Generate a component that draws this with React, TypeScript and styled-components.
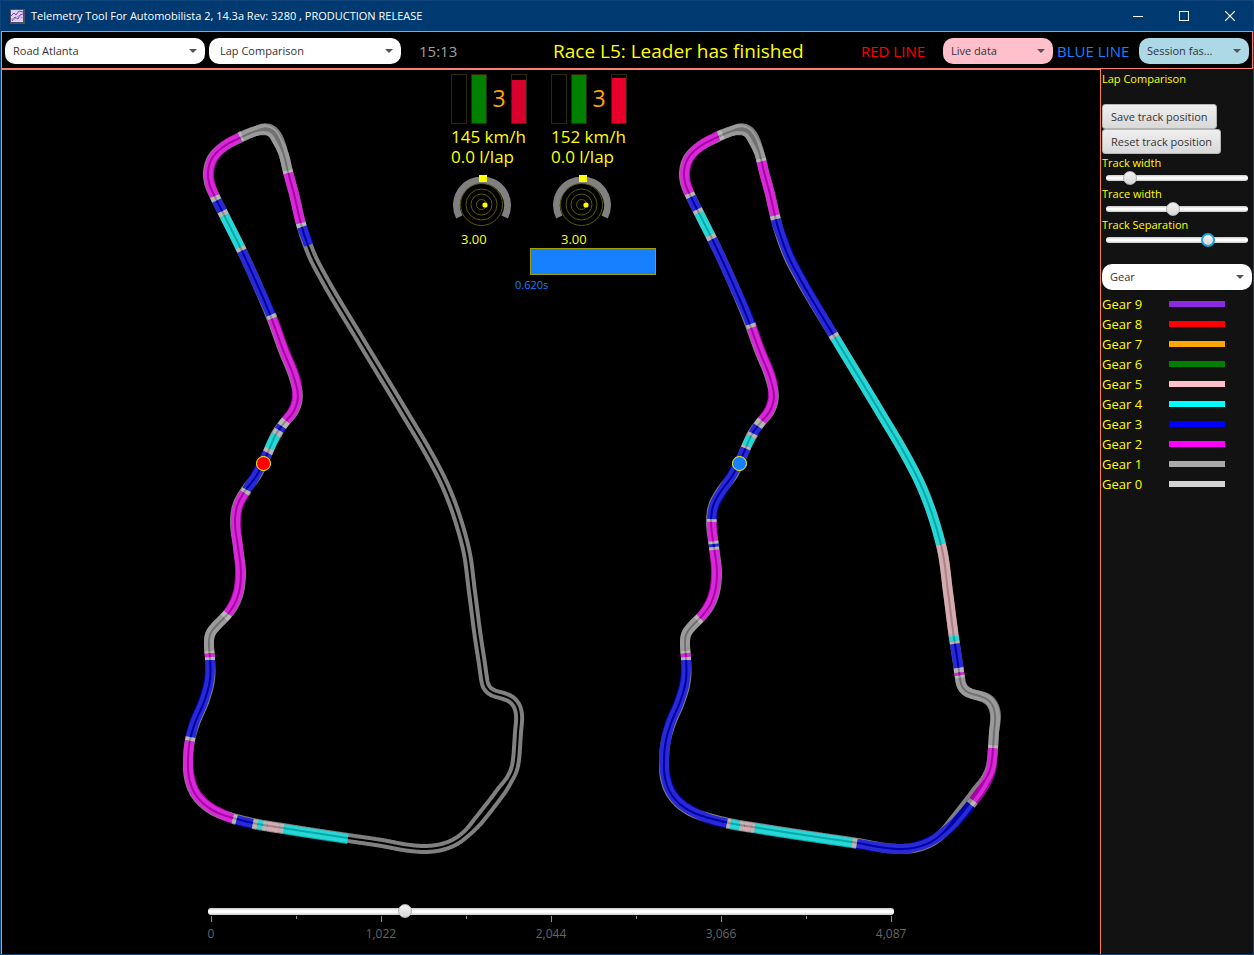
import React from "react";
import styled, { createGlobalStyle } from "styled-components";

const GlobalStyle = createGlobalStyle`
  * { box-sizing: border-box; }
  body {
    margin: 0;
    background: #000;
    font-family: "Open Sans", "Noto Sans", sans-serif;
    font-size: 11px;
    line-height: 16px;
  }
  button, select, input { font: inherit; margin: 0; }
`;

/* ---------- track geometry ---------- */

// x, y, half the distance between the two edge lines, racing line offset (outwards)
type ControlPoint = [number, number, number?, number?];
type Sample = { x: number; y: number; half: number; off: number; nx: number; ny: number };

const EDGE = 3;

const circuit: ControlPoint[] = [
  [265, 129, 4, 0], [256, 131, 3, 0], [242, 137, EDGE, 1], [223, 147, EDGE, 0], [212, 158, EDGE, -1],
  [208, 171, EDGE, -1], [209, 183, EDGE, -1], [215, 197], [223, 213], [241, 249, EDGE, 0], [257, 284],
  [271, 317, EDGE, -1], [283, 350, EDGE, -1], [295, 381, EDGE, -1], [298, 397, EDGE, 1], [294, 411, EDGE, 1],
  [284, 423], [276, 434, EDGE, -1], [271, 445], [268, 452], [263, 463, EDGE, 1], [257, 475, EDGE, 1],
  [245, 491, EDGE, -1], [237, 506, EDGE, -1], [235, 520, EDGE, -1], [238, 547], [241, 574, EDGE, 1],
  [239, 592, EDGE, 1], [233, 607, EDGE, 1], [226, 616], [217, 625], [210, 634], [209, 646], [210, 658],
  [210, 680, EDGE, 1], [204, 702, EDGE, 1], [195, 723, EDGE, 1], [190, 740], [188, 760, EDGE, 0], [189, 778, EDGE, -1],
  [195, 794, EDGE, -1], [205, 805, EDGE, -1], [218, 813, EDGE, -1], [233, 818, EDGE, 1], [253, 823, EDGE, 1],
  [283, 828, EDGE, 1], [348, 838, EDGE, 1], [382, 843, EDGE, 1], [410, 848, EDGE, 0], [427, 849, EDGE, 0], [442, 847, EDGE, -1],
  [455, 842, EDGE, -1], [467, 833, 3, 0], [478, 821, 4, 2], [490, 806, 4, 3],
  [502, 790, 4, 3], [509, 780, 3, 2], [514, 770, 3, 1], [516, 760], [517, 748], [518, 732, EDGE, 0], [519, 714, EDGE, 1],
  [517, 706, EDGE, 1], [511, 699, EDGE, 1], [500, 695], [491, 692], [486, 687], [484, 678], [482, 664], [478, 638], [472, 592],
  [466, 549], [461, 530], [454, 508], [443, 481], [430, 456], [404, 412, EDGE, 0], [358, 336, EDGE, 0], [323, 277, EDGE, 1],
  [313, 258, EDGE, 1], [306, 240, EDGE, 1], [301, 224], [294, 194, EDGE, 0], [288, 172, EDGE, 0], [283, 152, 3, 0],
  [278, 140, 4, -1], [272, 131, 4, -1],
];

function sampleCircuit(points: ControlPoint[]): Sample[] {
  const n = points.length;
  const at = (i: number) => points[(i + n) % n];
  const dist = (a: ControlPoint, b: ControlPoint) => Math.hypot(b[0] - a[0], b[1] - a[1]);
  const slope = (i: number, k: 0 | 1) => {
    const h0 = dist(at(i - 1), at(i));
    const h1 = dist(at(i), at(i + 1));
    const d0 = (at(i)[k] - at(i - 1)[k]) / h0;
    const d1 = (at(i + 1)[k] - at(i)[k]) / h1;
    return (d0 * h1 + d1 * h0) / (h0 + h1);
  };
  const out: Sample[] = [];
  for (let i = 0; i < n; i++) {
    const a = at(i);
    const b = at(i + 1);
    const h = dist(a, b);
    const steps = Math.ceil(h);
    for (let s = 0; s < steps; s++) {
      const t = s / steps;
      const blend = t * t * (3 - 2 * t);
      const hermite = (k: 0 | 1) =>
        (1 - blend) * a[k] + blend * b[k] +
        (t * t * t - 2 * t * t + t) * h * slope(i, k) +
        (t * t * t - t * t) * h * slope(i + 1, k);
      const mix = (p: number, q: number) => p + (q - p) * t;
      out.push({
        x: hermite(0), y: hermite(1),
        half: mix(a[2] ?? EDGE, b[2] ?? EDGE), off: mix(a[3] ?? 0, b[3] ?? 0),
        nx: 0, ny: 0,
      });
    }
  }
  // Round off the whole-pixel control points with a short moving average.
  const reach = 5;
  const smooth = out.map((p, i) => {
    let x = 0;
    let y = 0;
    for (let k = -reach; k <= reach; k++) {
      const q = out[(i + k + out.length) % out.length];
      x += q.x;
      y += q.y;
    }
    const count = 2 * reach + 1;
    return { ...p, x: x / count, y: y / count };
  });
  return smooth.map((p, i) => {
    const prev = smooth[(i - 3 + smooth.length) % smooth.length];
    const next = smooth[(i + 3) % smooth.length];
    const dx = next.x - prev.x;
    const dy = next.y - prev.y;
    const len = Math.hypot(dx, dy);
    return { ...p, nx: -dy / len, ny: dx / len };
  });
}

const samples = sampleCircuit(circuit);

const toPath = (list: Sample[], shift: (s: Sample) => number) =>
  list.map((s, i) => `${i ? "L" : "M"}${(s.x + s.nx * shift(s)).toFixed(2)} ${(s.y + s.ny * shift(s)).toFixed(2)}`).join("");

const outerEdge = toPath(samples, (s) => s.half) + "Z";
const innerEdge = toPath(samples, (s) => -s.half) + "Z";

const nearest = (x: number, y: number) => {
  let best = 0;
  let bestDistance = Infinity;
  samples.forEach((s, i) => {
    const d = Math.hypot(s.x - x, s.y - y);
    if (d < bestDistance) { bestDistance = d; best = i; }
  });
  return best;
};

const gearColors = ["lightgray", "darkgray", "magenta", "blue", "cyan", "pink", "green", "orange", "red", "#8a2be2"];

// gear, then the point where the driver leaves that gear
type Stint = [number, number, number];
type Lap = { start: [number, number]; stints: Stint[] };

const liveLap: Lap = {
  start: [308, 245],
  stints: [
    [3, 302, 227], [0, 301, 223], [2, 288, 173], [0, 287, 170], [1, 243, 136], [0, 240, 137], [2, 215, 196],
    [0, 217, 200], [3, 222, 211], [0, 224, 216], [4, 240, 247], [0, 242, 251], [3, 270, 315], [0, 272, 319],
    [2, 286, 421], [0, 282, 426], [3, 279, 430], [0, 276, 435], [4, 270, 449], [0, 268, 453], [3, 246, 489],
    [0, 244, 493], [2, 228, 614], [0, 224, 618], [1, 209, 651], [0, 209, 653], [2, 210, 657], [0, 210, 660],
    [3, 190, 737], [0, 190, 741], [2, 233, 818], [0, 237, 819], [3, 253, 823], [0, 258, 824], [4, 263, 825],
    [0, 267, 826], [5, 279, 828], [0, 284, 829], [4, 348, 838],
  ],
};

const fastestLap: Lap = {
  start: [284, 159],
  stints: [
    [1, 247, 134], [0, 243, 136], [2, 214, 193], [0, 215, 197], [3, 221, 209], [0, 223, 213], [4, 234, 235],
    [0, 236, 239], [3, 274, 324], [0, 275, 328], [2, 286, 421], [0, 282, 426], [3, 277, 433], [0, 275, 437],
    [4, 271, 446], [0, 270, 449], [3, 236, 519], [0, 236, 522], [2, 237, 541], [0, 237, 544], [3, 238, 547],
    [0, 238, 550], [2, 224, 618], [0, 221, 621], [1, 209, 651], [0, 209, 653], [2, 210, 657], [0, 210, 660],
    [3, 251, 823], [0, 255, 824], [4, 264, 825], [0, 268, 826], [5, 275, 827], [0, 279, 828], [4, 376, 843],
    [0, 381, 844], [3, 493, 803], [0, 496, 799], [2, 519, 748], [0, 519, 745], [1, 484, 678], [0, 483, 675],
    [2, 483, 672], [0, 482, 668], [3, 479, 644], [0, 478, 641], [4, 478, 636], [0, 478, 634], [5, 465, 544],
    [4, 359, 338], [0, 357, 334], [3, 300, 219], [0, 299, 215], [2, 285, 162], [0, 284, 159],
  ],
};

function stintPaths(lap: Lap) {
  let from = nearest(...lap.start);
  return lap.stints.map(([gear, x, y]) => {
    const to = nearest(x, y);
    const count = (to - from + samples.length) % samples.length;
    const part = Array.from({ length: count + 1 }, (_, i) => samples[(from + i) % samples.length]);
    from = to;
    return { gear, d: toPath(part, (s) => s.off) };
  });
}

/* ---------- window frame ---------- */

const Window = styled.div`
  min-height: 100vh;
  display: flex;
  flex-direction: column;
  background: #000;
  border: 1px solid #0f447a;
`;

const TitleBar = styled.header`
  height: 30px;
  flex: none;
  display: flex;
  align-items: center;
  background: #003a70;
  color: #fff;
`;

const AppTitle = styled.h1`
  flex: 1;
  margin: 0 0 0 6px;
  font-size: 11px;
  font-weight: 400;
  white-space: nowrap;
`;

const AppIcon = styled.svg`
  margin-left: 9px;
  flex: none;
`;

const WindowButton = styled.button`
  width: 46px;
  height: 30px;
  padding: 0;
  border: 0;
  background: none;
  display: grid;
  place-items: center;
`;

const Toolbar = styled.div`
  height: 38px;
  flex: none;
  display: flex;
  align-items: center;
  gap: 4px;
  padding: 2px 3px 0;
  border: 1px solid #fa8072;
`;

const Clock = styled.time`
  margin-left: 14px;
  flex: none;
  width: 130px;
  font-size: 15px;
  line-height: 20px;
  color: #a0a0a0;
`;

const RaceStatus = styled.p`
  flex: 1;
  margin: 0;
  font-size: 19px;
  line-height: 26px;
  color: #ff0;
  white-space: nowrap;
`;

const LineLabel = styled.label<{ $color: string; $width: number }>`
  flex: none;
  width: ${(p) => p.$width}px;
  font-size: 15px;
  line-height: 20px;
  color: ${(p) => p.$color};
  white-space: nowrap;
`;

const ComboFrame = styled.div<{ $width: string }>`
  position: relative;
  flex: none;
  width: ${(p) => p.$width};
  height: 26px;
  &::after {
    content: "";
    position: absolute;
    right: 8px;
    top: 11px;
    border: 4px solid transparent;
    border-top-color: #555;
    border-bottom: 0;
    pointer-events: none;
  }
`;

const ComboSelect = styled.select<{ $fill: string; $inset: number }>`
  appearance: none;
  display: block;
  width: 100%;
  height: 26px;
  padding: 0 20px 0 ${(p) => p.$inset}px;
  border: 0;
  border-radius: 10px;
  background: ${(p) => p.$fill};
  color: #333;
`;

type ComboProps = { id?: string; label?: string; value: string; width: string; fill?: string; inset?: number };

const Combo = ({ id, label, value, width, fill = "#fff", inset = 8 }: ComboProps) => (
  <ComboFrame $width={width}>
    <ComboSelect id={id} aria-label={label} $fill={fill} $inset={inset}>
      <option>{value}</option>
    </ComboSelect>
  </ComboFrame>
);

const Body = styled.div`
  flex: 1;
  display: flex;
`;

/* ---------- track view ---------- */

const TrackView = styled.main`
  position: relative;
  flex: 1;
  min-width: 0;
  display: flex;
  flex-direction: column;
  border: 1px solid #fa8072;
  border-width: 1px 0 0 1px;
`;

const MapCanvas = styled.svg`
  display: block;
  width: 100%;
  flex: 1;
  min-height: 0;
`;

const Hud = styled.section`
  position: absolute;
  top: 4px;
  left: 0;
  right: 0;
  width: 200px;
  margin: 0 auto;
  color: #ff0;
`;

const HudColumns = styled.div`
  display: grid;
  grid-template-columns: 100px 100px;
`;

const Pedals = styled.div`
  display: flex;
  gap: 4px;
  height: 50px;
`;

const Meter = styled.div<{ $level: number; $color: string }>`
  width: 16px;
  height: 50px;
  border: 1px solid #2e2a00;
  background: linear-gradient(to top, ${(p) => p.$color} ${(p) => p.$level}%, #000 ${(p) => p.$level}%);
`;

const GearDigit = styled.span`
  width: 16px;
  font-size: 23px;
  line-height: 48px;
  text-align: center;
  color: orange;
`;

const Readings = styled.div`
  padding-top: 3px;
  height: 50px;
`;

const Reading = styled.div`
  font-size: 17px;
  line-height: 20px;
  white-space: nowrap;
`;

const Gauge = styled.svg`
  display: block;
`;

const ForceValue = styled.div`
  padding-left: 10px;
  font-size: 13px;
  line-height: 18px;
`;

const DeltaBar = styled.div`
  width: 126px;
  height: 27px;
  margin-left: 79px;
  border: 1px solid #a0a000;
  background: #1780ff;
`;

const DeltaText = styled.div`
  margin: 2px 0 0 64px;
  color: #1780ff;
`;

const GForce = ({ dotX }: { dotX: number }) => (
  <Gauge width="62" height="56" viewBox="0 0 62 56" aria-hidden="true">
    <path d="M8.3 43 A25.5 25.5 0 1 1 53.7 43" fill="none" stroke="#808080" strokeWidth="7" />
    <rect x="28" y="1" width="8" height="7" fill="#ff0" />
    {[21, 15.5, 10.5, 5].map((r) => (
      <circle key={r} cx="30.5" cy="30.5" r={r} fill="none" stroke="#5a5a00" />
    ))}
    <circle cx={dotX} cy="31" r="2.6" fill="#ff0" />
  </Gauge>
);

const CarHud = ({ throttle, throttleColor, speed, dotX }: { throttle: number; throttleColor: string; speed: number; dotX: number }) => (
  <div>
    <Pedals>
      <Meter $level={0} $color="#000" />
      <Meter $level={100} $color="green" />
      <GearDigit>3</GearDigit>
      <Meter $level={throttle} $color={throttleColor} />
    </Pedals>
    <Readings>
      <Reading>{speed} km/h</Reading>
      <Reading>0.0 l/lap</Reading>
    </Readings>
    <GForce dotX={dotX} />
    <ForceValue>3.00</ForceValue>
  </div>
);

const TrackMap = ({ lap, x, marker }: { lap: Lap; x: number; marker: string }) => (
  <g transform={`translate(${x} 0)`} fill="none">
    <path d={outerEdge} stroke="#808080" strokeWidth="4" />
    <path d={innerEdge} stroke="#808080" strokeWidth="4" />
    {stintPaths(lap).map(({ gear, d }, i) => (
      <path key={i} d={d} stroke={gearColors[gear]} strokeOpacity="0.67" strokeWidth="10" />
    ))}
    <circle cx="263.5" cy="463.5" r="7" fill={marker} stroke="#ff0" />
  </g>
);

/* ---------- sliders ---------- */

const Range = styled.input<{ $active?: boolean; $wide?: boolean }>`
  appearance: none;
  display: block;
  width: ${(p) => (p.$wide ? "100%" : "142px")};
  height: 14px;
  margin-left: ${(p) => (p.$wide ? 0 : 4)}px;
  background: none;
  &::-webkit-slider-runnable-track {
    height: ${(p) => (p.$wide ? 7 : 6)}px;
    border-radius: 3px;
    background: linear-gradient(#c8c8c8, #fff 40%, #fff 60%, #c8c8c8);
  }
  &::-webkit-slider-thumb {
    appearance: none;
    width: 14px;
    height: 14px;
    margin-top: -4px;
    border-radius: 50%;
    border: ${(p) => (p.$active ? "2px solid #1ba1d6" : "1px solid #b4b4b4")};
    background: linear-gradient(#f2f2f2, #d8d8d8);
  }
`;

const Timeline = styled.div`
  width: 62.5%;
  margin: 0 auto;
  padding-bottom: 12px;
`;

const Ticks = styled.div`
  display: flex;
  justify-content: space-between;
  align-items: flex-start;
  height: 6px;
  margin: -2px 2px 0 3px;
`;

const Tick = styled.span<{ $major: boolean }>`
  width: 1px;
  height: ${(p) => (p.$major ? 6 : 3)}px;
  background: #8c8c8c;
`;

const TickLabels = styled.div`
  display: flex;
  justify-content: space-between;
  margin: 4px -27px 0;
  font-size: 12px;
  color: #666;
`;

const TickLabel = styled.span`
  width: 60px;
  text-align: center;
`;

/* ---------- side panel ---------- */

const SidePanel = styled.aside`
  width: 153px;
  flex: none;
  padding: 0 0 16px 1px;
  border: 1px solid #ff7f50;
  border-width: 0 0 0 1px;
  background: #121212;
  color: #ff0;
`;

const PanelTitle = styled.h2`
  margin: 2px 0 17px;
  font-size: 11px;
  font-weight: 400;
`;

const PanelButtons = styled.div`
  display: flex;
  flex-direction: column;
  align-items: flex-start;
  margin-bottom: 1px;
`;

const PanelButton = styled.button`
  height: 25px;
  padding: 0 8px;
  border: 1px solid #b4b4b4;
  border-radius: 3px;
  background: linear-gradient(#efefef, #d9d9d9);
  color: #333;
  white-space: nowrap;
`;

const SliderField = styled.label`
  display: block;
  height: 31px;
`;

const ComboSlot = styled.div`
  margin-top: 16px;
`;

const Legend = styled.ul`
  margin: 4px 0 0;
  padding: 0;
  list-style: none;
`;

const LegendRow = styled.li`
  display: grid;
  grid-template-columns: 67px 56px;
  align-items: center;
  height: 20px;
  font-size: 13px;
`;

const Swatch = styled.span<{ $color: string }>`
  height: 6px;
  background: ${(p) => p.$color};
`;

const sliders = [
  { label: "Track width", value: 13 },
  { label: "Trace width", value: 47 },
  { label: "Track Separation", value: 74, active: true },
];

export default function App() {
  return (
    <>
      <GlobalStyle />
      <Window>
        <TitleBar>
          <AppIcon width="15" height="15" viewBox="0 0 15 15" aria-hidden="true">
            <rect width="15" height="15" fill="#55505e" />
            <rect x="1" y="1" width="12" height="12" fill="#dcd2f0" />
            <path d="M1 7L4 4L6 6L9 2L13 3M2 12L5 8L8 10L10 6L13 5" fill="none" stroke="#7a3fc0" />
            <path d="M1 10L5 10L8 7L13 9" fill="none" stroke="#b08ad8" />
          </AppIcon>
          <AppTitle>Telemetry Tool For Automobilista 2, 14.3a Rev: 3280 , PRODUCTION RELEASE</AppTitle>
          <WindowButton aria-label="Minimize">
            <svg width="10" height="10"><path d="M0 5.5H10" stroke="#fff" /></svg>
          </WindowButton>
          <WindowButton aria-label="Maximize">
            <svg width="10" height="10"><rect x="0.5" y="0.5" width="9" height="9" fill="none" stroke="#fff" /></svg>
          </WindowButton>
          <WindowButton aria-label="Close">
            <svg width="10" height="10"><path d="M0 0L10 10M10 0L0 10" stroke="#fff" strokeWidth="1.2" /></svg>
          </WindowButton>
        </TitleBar>

        <Toolbar>
          <Combo label="Track" value="Road Atlanta" width="200px" />
          <Combo label="View" value="Lap Comparison" width="192px" inset={11} />
          <Clock>15:13</Clock>
          <RaceStatus>Race L5: Leader has finished</RaceStatus>
          <LineLabel htmlFor="red-line" $color="#f00" $width={78}>RED LINE</LineLabel>
          <Combo id="red-line" value="Live data" width="110px" fill="pink" />
          <LineLabel htmlFor="blue-line" $color="#1780ff" $width={78}>BLUE LINE</LineLabel>
          <Combo id="blue-line" value="Session fas..." width="110px" fill="lightblue" />
        </Toolbar>

        <Body>
          <TrackView>
            <MapCanvas viewBox="2 70 1098 800" preserveAspectRatio="xMidYMin meet" role="img" aria-label="Track maps">
              <TrackMap lap={liveLap} x={0} marker="#f00" />
              <TrackMap lap={fastestLap} x={476} marker="#1780ff" />
            </MapCanvas>
            <Timeline>
              <Range type="range" $wide aria-label="Lap distance" min={0} max={4087} defaultValue={1154} />
              <Ticks>
                {Array.from({ length: 9 }, (_, i) => <Tick key={i} $major={i % 2 === 0} />)}
              </Ticks>
              <TickLabels>
                {["0", "1,022", "2,044", "3,066", "4,087"].map((t) => <TickLabel key={t}>{t}</TickLabel>)}
              </TickLabels>
            </Timeline>
            <Hud>
              <HudColumns>
                <CarHud throttle={89} throttleColor="#d8002c" speed={145} dotX={34} />
                <CarHud throttle={94} throttleColor="#e8002a" speed={152} dotX={35} />
              </HudColumns>
              <DeltaBar />
              <DeltaText>0.620s</DeltaText>
            </Hud>
          </TrackView>

          <SidePanel>
            <PanelTitle>Lap Comparison</PanelTitle>
            <PanelButtons>
              <PanelButton>Save track position</PanelButton>
              <PanelButton>Reset track position</PanelButton>
            </PanelButtons>
            {sliders.map((s) => (
              <SliderField key={s.label}>
                {s.label}
                <Range type="range" $active={s.active} min={0} max={100} defaultValue={s.value} />
              </SliderField>
            ))}
            <ComboSlot>
              <Combo label="Trace data" value="Gear" width="150px" />
            </ComboSlot>
            <Legend>
              {[9, 8, 7, 6, 5, 4, 3, 2, 1, 0].map((g) => (
                <LegendRow key={g}>
                  Gear {g}
                  <Swatch $color={gearColors[g]} />
                </LegendRow>
              ))}
            </Legend>
          </SidePanel>
        </Body>
      </Window>
    </>
  );
}
